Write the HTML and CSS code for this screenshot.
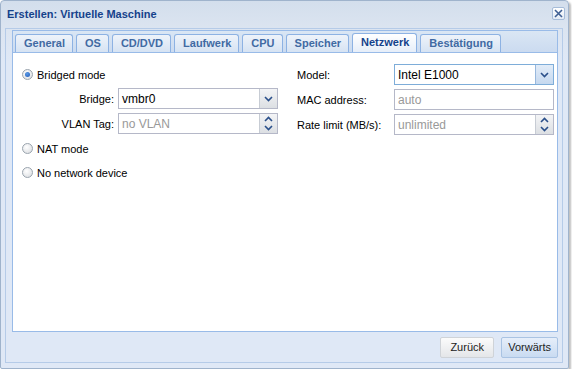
FILE: index.html
```html
<!DOCTYPE html>
<html lang="de">

<head>
    <meta charset="UTF-8">
    <meta name="viewport" content="width=device-width, initial-scale=1.0">
    <title>Erstellen: Virtuelle Maschine</title>
    <link rel="stylesheet" href="styles.css">
</head>

<body>
    <div class="window">
        <div class="win-header">
            <span class="win-title">Erstellen: Virtuelle Maschine</span>
            <span class="win-close">
                <svg width="9" height="9" viewBox="0 0 9 9"><path d="M1 1L8 8M8 1L1 8" stroke="#3f5f93" stroke-width="1.6"/></svg>
            </span>
        </div>
        <div class="win-frame">
            <div class="tab-strip">
                <span class="tab">General</span>
                <span class="tab">OS</span>
                <span class="tab">CD/DVD</span>
                <span class="tab">Laufwerk</span>
                <span class="tab">CPU</span>
                <span class="tab">Speicher</span>
                <span class="tab active">Netzwerk</span>
                <span class="tab">Bestätigung</span>
            </div>
            <div class="tab-panel">
                <div class="col col-left">
                    <div class="radio-row"><span class="radio checked"></span>Bridged mode</div>
                    <div class="field-row">
                        <span class="field-label">Bridge:</span>
                        <div class="field">
                            <span class="field-text">vmbr0</span>
                            <span class="trigger">
                                <svg width="9" height="6" viewBox="0 0 9 6"><path d="M1 1L4.5 4.5L8 1" fill="none" stroke="#2a4f8a" stroke-width="1.6"/></svg>
                            </span>
                        </div>
                    </div>
                    <div class="field-row">
                        <span class="field-label">VLAN Tag:</span>
                        <div class="field">
                            <span class="field-text empty">no VLAN</span>
                            <span class="trigger spinner">
                                <svg width="9" height="6" viewBox="0 0 9 6"><path d="M1 5L4.5 1.5L8 5" fill="none" stroke="#2a4f8a" stroke-width="1.6"/></svg>
                                <svg width="9" height="6" viewBox="0 0 9 6"><path d="M1 1L4.5 4.5L8 1" fill="none" stroke="#2a4f8a" stroke-width="1.6"/></svg>
                            </span>
                        </div>
                    </div>
                    <div class="radio-row"><span class="radio"></span>NAT mode</div>
                    <div class="radio-row"><span class="radio"></span>No network device</div>
                </div>
                <div class="col col-right">
                    <div class="field-row">
                        <span class="field-label">Model:</span>
                        <div class="field focus">
                            <span class="field-text">Intel E1000</span>
                            <span class="trigger">
                                <svg width="9" height="6" viewBox="0 0 9 6"><path d="M1 1L4.5 4.5L8 1" fill="none" stroke="#2a4f8a" stroke-width="1.6"/></svg>
                            </span>
                        </div>
                    </div>
                    <div class="field-row">
                        <span class="field-label">MAC address:</span>
                        <div class="field">
                            <span class="field-text empty">auto</span>
                        </div>
                    </div>
                    <div class="field-row">
                        <span class="field-label">Rate limit (MB/s):</span>
                        <div class="field">
                            <span class="field-text empty">unlimited</span>
                            <span class="trigger spinner">
                                <svg width="9" height="6" viewBox="0 0 9 6"><path d="M1 5L4.5 1.5L8 5" fill="none" stroke="#2a4f8a" stroke-width="1.6"/></svg>
                                <svg width="9" height="6" viewBox="0 0 9 6"><path d="M1 1L4.5 4.5L8 1" fill="none" stroke="#2a4f8a" stroke-width="1.6"/></svg>
                            </span>
                        </div>
                    </div>
                </div>
            </div>
            <div class="win-footer">
                <button class="btn">Zurück</button>
                <button class="btn btn-primary">Vorwärts</button>
            </div>
        </div>
    </div>
</body>

</html>
```

FILE: styles.css
```css
body {
    margin: 0;
    background-color: #ffffff;
    font-family: "Liberation Sans", Arial, sans-serif;
    font-size: 11px;
    color: #000;
}

.window {
    width: 569px;
    height: 369px;
    box-sizing: border-box;
    border: 1px solid #9fb3cc;
    border-radius: 4px 4px 2px 2px;
    background: linear-gradient(#d3deec, #dce5f1 30px, #dfe8f6 60px);
    box-shadow: 2px 2px 2px rgba(0, 0, 0, 0.25);
    display: flex;
    flex-direction: column;
}

.win-header {
    height: 26px;
    display: flex;
    align-items: center;
    justify-content: space-between;
    padding: 0 3px 0 6px;
}

.win-title {
    font-weight: bold;
    color: #15428b;
    font-size: 11px;
}

.win-close {
    width: 13px;
    height: 13px;
    box-sizing: border-box;
    border: 1px solid #a6bcd9;
    border-radius: 2px;
    background: linear-gradient(#ffffff, #e3ebf5);
    display: flex;
    align-items: center;
    justify-content: center;
    margin-top: -1px;
}

.win-frame {
    flex: 1;
    margin: 1px 5px 5px 4px;
    border: 1px solid #b5cbe8;
    padding: 1px 4px 0 6px;
    display: flex;
    flex-direction: column;
}

.tab-strip {
    height: 21px;
    border: 1px solid #99bbe8;
    border-bottom: none;
    background: linear-gradient(#dae6f4, #cbdbf0);
    display: flex;
    align-items: flex-end;
    gap: 3px;
    padding-left: 2px;
}

.tab {
    height: 17px;
    line-height: 17px;
    padding: 0 7px 0 8px;
    border: 1px solid #8db2e3;
    border-bottom: none;
    border-radius: 3px 3px 0 0;
    background: linear-gradient(#eef3fa, #d6e3f3);
    color: #416aa3;
    font-weight: bold;
}

.tab.active {
    height: 18px;
    background: linear-gradient(#ffffff, #e6eef9);
    color: #15428b;
}

.tab-panel {
    flex: 1;
    background-color: #fff;
    border: 1px solid #99bbe8;
    display: flex;
    gap: 19px;
    padding: 11px 4px 0 9px;
}

.col {
    display: flex;
    flex-direction: column;
}

.col-left {
    width: 256px;
}

.col-right {
    width: 257px;
}

.radio-row {
    display: flex;
    align-items: center;
    height: 21px;
    margin-bottom: 3px;
}

.radio {
    width: 11px;
    height: 11px;
    box-sizing: border-box;
    border: 1px solid #9aa4ae;
    border-radius: 50%;
    background: radial-gradient(circle at 40% 35%, #ffffff, #d6d9dd);
    margin-right: 4px;
    position: relative;
}

.radio.checked::after {
    content: "";
    position: absolute;
    left: 2px;
    top: 2px;
    width: 5px;
    height: 5px;
    border-radius: 50%;
    background: radial-gradient(circle at 40% 35%, #5b9be6, #1d57b8);
}

.field-row {
    display: flex;
    align-items: center;
    height: 21px;
    margin-bottom: 4px;
}

.col-left .field-row .field-label {
    width: 92px;
    text-align: right;
    padding-right: 4px;
}

.col-right .field-row .field-label {
    width: 97px;
}

.field {
    width: 160px;
    height: 21px;
    box-sizing: border-box;
    border: 1px solid #b5b8c8;
    background-color: #fff;
    display: flex;
    align-items: stretch;
}

.field.focus {
    border-color: #7eadd9;
}

.field-text {
    flex: 1;
    padding: 0 3px;
    display: flex;
    align-items: center;
    font-size: 12px;
}

.field-text.empty {
    color: #999;
}

.trigger {
    width: 17px;
    border-left: 1px solid #c7ccd4;
    background: linear-gradient(#f3f4f6, #dcdfe3);
    display: flex;
    flex-direction: column;
    align-items: center;
    justify-content: center;
}

.field.focus .trigger {
    border-left-color: #98b8dd;
    background: linear-gradient(#e2ecf8, #c5d8ef);
}

.trigger.spinner {
    justify-content: space-around;
    padding: 1px 0;
}

.win-footer {
    height: 30px;
    display: flex;
    justify-content: flex-end;
    align-items: center;
    gap: 7px;
    padding-right: 0;
}

.btn {
    height: 21px;
    min-width: 54px;
    padding: 0 6px;
    border: 1px solid #cfd3d8;
    border-radius: 2px;
    background: linear-gradient(#fbfbfb, #e4e6e9);
    font-family: "Liberation Sans", Arial, sans-serif;
    font-size: 11px;
    color: #222;
}

.btn-primary {
    border-color: #a9c3e3;
    background: linear-gradient(#e6eefa, #c9dbf1);
}
```
